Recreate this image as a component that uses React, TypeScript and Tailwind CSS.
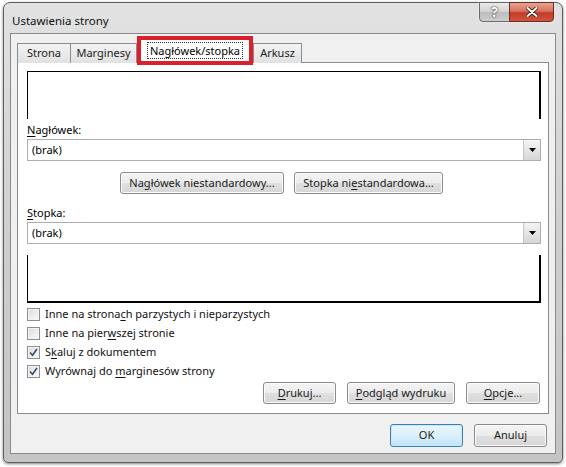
import React from "react";

const font = "font-['Segoe_UI','Noto_Sans','Open_Sans',sans-serif]";

function U({ children }: { children: React.ReactNode }) {
  return <span className="underline underline-offset-[2px] decoration-[1px]">{children}</span>;
}

function Button({
  children,
  className = "",
  primary = false,
}: {
  children: React.ReactNode;
  className?: string;
  primary?: boolean;
}) {
  return (
    <div
      className={
        "h-[22px] rounded-[3px] border flex items-center justify-center text-[11px] text-[#1a1a1a] " +
        (primary
          ? "border-[#3c7fb1] bg-gradient-to-b from-[#eaf6fd] via-[#dcf0fb] to-[#bfe3f7] shadow-[inset_0_0_0_1px_#c9eafa] "
          : "border-[#8a8a8a] bg-[linear-gradient(to_bottom,#f4f4f4_0%,#ececec_50%,#e0e0e0_51%,#d6d6d6_100%)] shadow-[inset_0_0_0_1px_#fcfcfc] ") +
        className
      }
    >
      {children}
    </div>
  );
}

function Dropdown() {
  return (
    <div className="h-[22px] border border-[#abadb3] bg-white flex items-center justify-between">
      <span className="pl-[4px] text-[11px] text-black">(brak)</span>
      <div className="h-[20px] w-[17px] border-l border-[#c5c5c5] bg-gradient-to-b from-[#f4f4f4] to-[#d6d6d6] flex items-center justify-center">
        <svg width="7" height="4" viewBox="0 0 7 4">
          <path d="M0 0 H7 L3.5 4 Z" fill="#000" />
        </svg>
      </div>
    </div>
  );
}

function Checkbox({ checked, children }: { checked?: boolean; children: React.ReactNode }) {
  return (
    <div className="h-[19px] flex items-center">
      <div className="w-[13px] h-[13px] border border-[#8f8f8f] bg-gradient-to-br from-[#dcdcdc] to-[#fbfbfb] shadow-[inset_0_0_0_1px_#f4f4f4] flex items-center justify-center">
        {checked && (
          <svg width="9" height="9" viewBox="0 0 9 9">
            <path d="M1 4.5 L3.5 7.2 L8 1" stroke="#3b4b6e" strokeWidth="1.6" fill="none" />
          </svg>
        )}
      </div>
      <span className="ml-[5px] text-[11px] text-[#111]">{children}</span>
    </div>
  );
}

function Tab({ children, w }: { children: React.ReactNode; w: string }) {
  return (
    <div
      className={
        "h-[20px] mt-[2px] -mr-px border border-b-0 border-[#898c95] bg-gradient-to-b from-[#f3f3f3] to-[#e1e1e1] flex items-center justify-center text-[11px] text-[#222] " +
        w
      }
    >
      {children}
    </div>
  );
}

export default function App() {
  return (
    <div className={"w-[566px] h-[467px] bg-white overflow-hidden " + font}>
      <div className="ml-[3px] mt-[2px] w-[560px] h-[461px] rounded-t-[7px] rounded-b-[5px] border border-[#5e5e5e] bg-gradient-to-b from-[#e2e2e2] via-[#cfcfcf] to-[#c4c4c4] shadow-[0_1px_3px_rgba(0,0,0,0.5)] flex flex-col">
        {/* title bar */}
        <div className="h-[30px] flex justify-between items-start">
          <span className="pl-[8px] pt-[9px] text-[11.5px] text-[#111]">Ustawienia strony</span>
          <div className="flex mr-[8px] -mt-px shadow-[0_0_2px_rgba(255,255,255,0.8)]">
            <div className="w-[31px] h-[20px] rounded-bl-[4px] border border-[#6b6b6b] bg-[linear-gradient(to_bottom,#eaeaea_0%,#d2d2d2_50%,#bdbdbd_51%,#cdcdcd_100%)] flex items-center justify-center">
              <span className="text-[14px] font-bold text-white leading-none [text-shadow:0_0_2px_#333,0_0_1px_#333]">?</span>
            </div>
            <div className="w-[45px] h-[20px] -ml-px rounded-br-[4px] border border-[#6b2a22] bg-[linear-gradient(to_bottom,#e8a493_0%,#d6735f_45%,#c43b26_55%,#d0543d_100%)] flex items-center justify-center">
              <svg width="12" height="10" viewBox="0 0 12 10">
                <path d="M1.5 1 L10.5 9 M10.5 1 L1.5 9" stroke="#3b1a14" strokeWidth="3.6" strokeLinecap="round" />
                <path d="M1.5 1 L10.5 9 M10.5 1 L1.5 9" stroke="#fff" strokeWidth="2" strokeLinecap="round" />
              </svg>
            </div>
          </div>
        </div>

        {/* client area */}
        <div className="mx-[6px] mb-[8px] flex-1 border border-[#8a8a8a] bg-[#f0f0f0] flex flex-col px-[6px] pt-[6px]">
          {/* tabs */}
          <div className="flex items-end h-[23px] relative z-10">
            <Tab w="w-[54px]">Strona</Tab>
            <Tab w="w-[67px]">Marginesy</Tab>
            <div className="w-[116px] h-[29px] -mt-[6px] mb-[-2px] border-[4px] border-[#d9202c] flex ml-[1px]">
              <div className="flex-1 bg-white flex items-center justify-center">
                <span className="px-[2px] border border-dotted border-[#333] text-[11px] text-black leading-[15px]">
                  Nagłówek/stopka
                </span>
              </div>
            </div>
            <Tab w="w-[49px]">Arkusz</Tab>
          </div>

          {/* tab panel */}
          <div className="h-[352px] -mt-px border border-[#898c95] bg-white flex flex-col pl-[9px] pr-[7px] pt-[8px]">
            <div className="h-[48px] border-t border-l border-black border-r-2" />
            <div className="h-[20px] pt-[3px] text-[11px] text-black leading-[16px]">
              <U>N</U>agłówek:
            </div>
            <Dropdown />
            <div className="flex mt-[11px] pl-[93px] gap-[10px]">
              <Button className="w-[164px]">
                <span>
                  Na<U>g</U>łówek niestandardowy...
                </span>
              </Button>
              <Button className="w-[149px]">
                <span>
                  Stopka ni<U>e</U>standardowa...
                </span>
              </Button>
            </div>
            <div className="h-[28px] pt-[11px] text-[11px] text-black leading-[16px]">
              <U>S</U>topka:
            </div>
            <Dropdown />
            <div className="mt-[11px] h-[48px] border-l border-black border-r-2 border-b-2" />
            <div className="mt-[2px] flex flex-col">
              <Checkbox>
                Inne na strona<U>c</U>h parzystych i nieparzystych
              </Checkbox>
              <Checkbox>
                Inne na pier<U>w</U>szej stronie
              </Checkbox>
              <Checkbox checked>
                S<U>k</U>aluj z dokumentem
              </Checkbox>
              <Checkbox checked>
                Wyrównaj do <U>m</U>arginesów strony
              </Checkbox>
            </div>
            <div className="flex justify-end gap-[11px] mt-[1px] pr-[1px]">
              <Button className="w-[73px]">
                <span>
                  <U>D</U>rukuj...
                </span>
              </Button>
              <Button className="w-[108px]">
                <span>
                  <U>P</U>odgląd wydruku
                </span>
              </Button>
              <Button className="w-[74px]">
                <span>
                  <U>O</U>pcje...
                </span>
              </Button>
            </div>
          </div>

          {/* dialog buttons */}
          <div className="flex justify-end gap-[11px] mt-[10px] pr-[2px]">
            <Button primary className="w-[73px] h-[23px]">
              OK
            </Button>
            <Button className="w-[73px] h-[23px]">Anuluj</Button>
          </div>
        </div>
      </div>
    </div>
  );
}
